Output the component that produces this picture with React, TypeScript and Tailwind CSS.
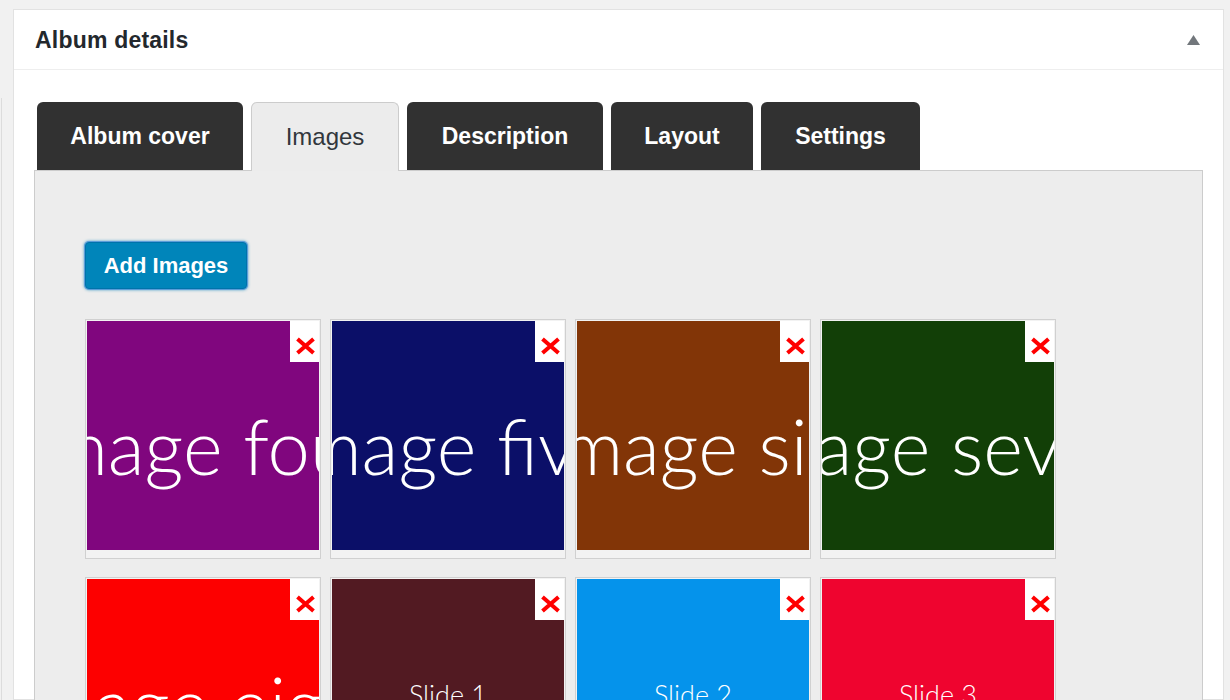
import React from "react";

type Tile = { color: string; label: string; small?: boolean };

const tiles: Tile[] = [
  { color: "bg-[#80067e]", label: "Image four" },
  { color: "bg-[#0b0f68]", label: "Image five" },
  { color: "bg-[#823507]", label: "Image six" },
  { color: "bg-[#123f07]", label: "Image seven" },
  { color: "bg-[#fd0000]", label: "Image eight" },
  { color: "bg-[#521a22]", label: "Slide 1", small: true },
  { color: "bg-[#0593eb]", label: "Slide 2", small: true },
  { color: "bg-[#ef042f]", label: "Slide 3", small: true },
];

const tabs = [
  { label: "Album cover", w: "w-[206px]", active: false },
  { label: "Images", w: "w-[148px]", active: true },
  { label: "Description", w: "w-[196px]", active: false },
  { label: "Layout", w: "w-[142px]", active: false },
  { label: "Settings", w: "w-[159px]", active: false },
];

function CloseX() {
  return (
    <div className="absolute top-0 right-0 w-[29px] h-[41px] bg-white flex justify-center">
      <svg width="21" height="18" viewBox="0 0 21 18" className="mt-[16px] ml-[1px]">
        <path d="M2.5 2 L18.5 16 M18.5 2 L2.5 16" stroke="#ff0000" strokeWidth="4" strokeLinecap="butt" />
      </svg>
    </div>
  );
}

function ImageTile({ t }: { t: Tile }) {
  return (
    <div className="w-[236px] border border-[#d0d0d0] bg-[#f2f2f2] p-px pb-[8px]">
      <div className={`relative w-[232px] h-[229px] overflow-hidden flex items-center justify-center ${t.color}`}>
        {t.small ? (
          <span className="text-white whitespace-nowrap leading-none text-[27px] font-light pt-[2px] font-['Lato','Open_Sans',sans-serif]">
            {t.label}
          </span>
        ) : (
          <span className="text-white whitespace-nowrap leading-none text-[76px] font-light pt-[20px] font-['Lato','Open_Sans',sans-serif]">
            {t.label}
          </span>
        )}
        <CloseX />
      </div>
    </div>
  );
}

export default function App() {
  return (
    <div className="h-[700px] w-[1230px] bg-[#f1f1f1] flex overflow-hidden font-['Liberation_Sans',Arial,sans-serif]">
      <div className="w-[13px] shrink-0 flex">
        <div className="ml-[1px] w-px mt-[98px] bg-[#dcdcdc]" />
      </div>
      <div className="w-[1211px] shrink-0 mt-[9px] bg-white border border-[#e2e2e2] flex flex-col">
        <div className="h-[60px] border-b border-[#eeeeee] flex items-center justify-between pl-[21px] pr-[23px] shrink-0">
          <span className="text-[23px] font-bold text-[#23282d] tracking-[0.2px] mt-[2px]">Album details</span>
          <svg width="13" height="10" viewBox="0 0 13 10" className="mt-[1px]">
            <path d="M6.5 0 L13 10 L0 10 Z" fill="#72777c" />
          </svg>
        </div>
        <div className="pt-[32px] px-[20px] flex flex-col flex-1">
          <div className="flex items-end gap-x-[8px] ml-[3px] relative z-10">
            {tabs.map((t) =>
              t.active ? (
                <div
                  key={t.label}
                  className={`${t.w} h-[69px] -mb-px rounded-t-[6px] border border-b-0 border-[#cccccc] bg-[#ececec] flex items-center justify-center text-[24px] text-[#32373c]`}
                >
                  {t.label}
                </div>
              ) : (
                <div
                  key={t.label}
                  className={`${t.w} h-[68px] rounded-t-[6px] bg-[#313131] flex items-center justify-center text-[23px] font-bold text-white`}
                >
                  {t.label}
                </div>
              )
            )}
          </div>
          <div className="flex-1 border border-[#cccccc] bg-[#ededed] pt-[71px] pl-[50px]">
            <button className="w-[162px] h-[47px] rounded-[4px] bg-[#0085ba] border border-[#0073aa] text-white text-[22px] font-bold shadow-[0_0_0_1px_#5b9dd9,0_0_3px_1px_rgba(30,140,190,0.8)] font-['Liberation_Sans',Arial,sans-serif]">
              Add Images
            </button>
            <div className="mt-[30px] grid grid-cols-[repeat(4,236px)] gap-x-[9px] gap-y-[18px]">
              {tiles.map((t) => (
                <ImageTile key={t.label} t={t} />
              ))}
            </div>
          </div>
        </div>
      </div>
    </div>
  );
}
